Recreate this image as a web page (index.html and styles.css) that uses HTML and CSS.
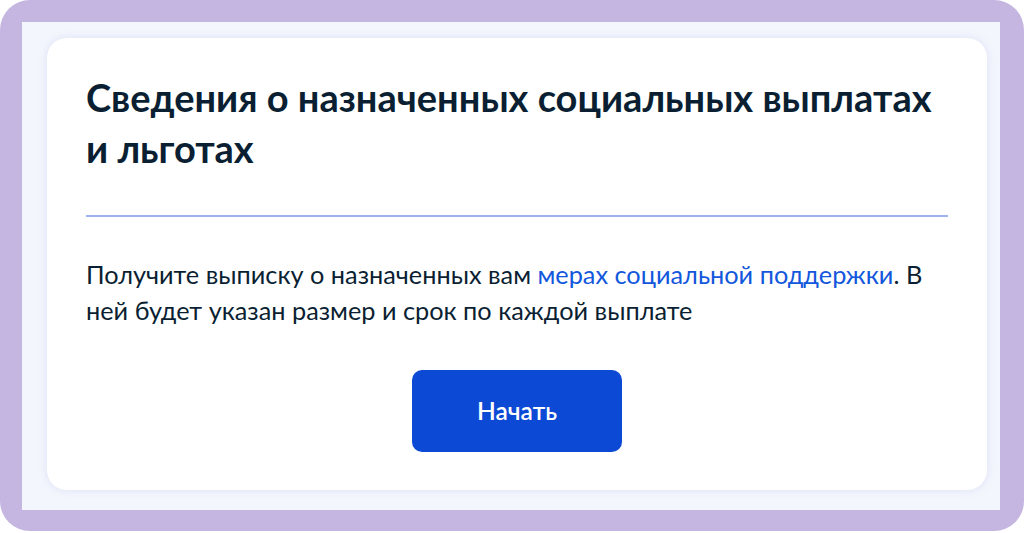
FILE: index.html
```html
<!DOCTYPE html>
<html lang="ru">
<head>
<meta charset="utf-8">
<title>Сведения о назначенных социальных выплатах и льготах</title>
<link rel="stylesheet" href="styles.css">
</head>
<body>
<div class="frame">
  <div class="inner">
    <section class="card">
      <h1 class="title">Сведения о назначенных социальных выплатах и&nbsp;льготах</h1>
      <div class="divider"></div>
      <p class="text">Получите выписку о назначенных вам <a class="link" href="#">мерах социальной поддержки</a>. В ней будет указан размер и срок по каждой выплате</p>
      <div class="actions">
        <button class="btn" type="button">Начать</button>
      </div>
    </section>
  </div>
</div>
</body>
</html>
```
FILE: styles.css
```css
* { box-sizing: border-box; }
html, body { margin: 0; padding: 0; background: #ffffff; }
body { font-family: Lato, "Noto Sans", sans-serif; color: #0b1f33; }

.frame {
  width: 1024px;
  height: 531px;
  background: #c4b6e1;
  border-radius: 30px;
  padding: 22px 24px 21px 22px;
}
.inner {
  height: 100%;
  background: #f4f6fd;
  padding: 16px 13px 20px 25px;
}
.card {
  height: 452px;
  background: #ffffff;
  border-radius: 20px;
  box-shadow: 0 0 8px rgba(150, 170, 220, 0.25);
  padding: 34px 39px 0 39px;
  display: flex;
  flex-direction: column;
}
.title {
  margin: 0;
  font-size: 38px;
  line-height: 51px;
  font-weight: 700;
  color: #0b1f33;
}
.divider {
  margin-top: 41px;
  height: 1.5px;
  background: #9db4ef;
}
.text {
  margin: 39px 0 0 0;
  font-size: 25.3px;
  line-height: 36px;
  color: #0b1f33;
}
.link { color: #1257dc; text-decoration: none; }
.actions {
  display: flex;
  justify-content: center;
  margin-top: 42px;
}
.btn {
  width: 210px;
  height: 82px;
  border: 0;
  border-radius: 10px;
  background: #0c4ad5;
  color: #ffffff;
  font-family: Lato, "Noto Sans", sans-serif;
  font-size: 24.5px;
  font-weight: 600;
  cursor: pointer;
}
```
